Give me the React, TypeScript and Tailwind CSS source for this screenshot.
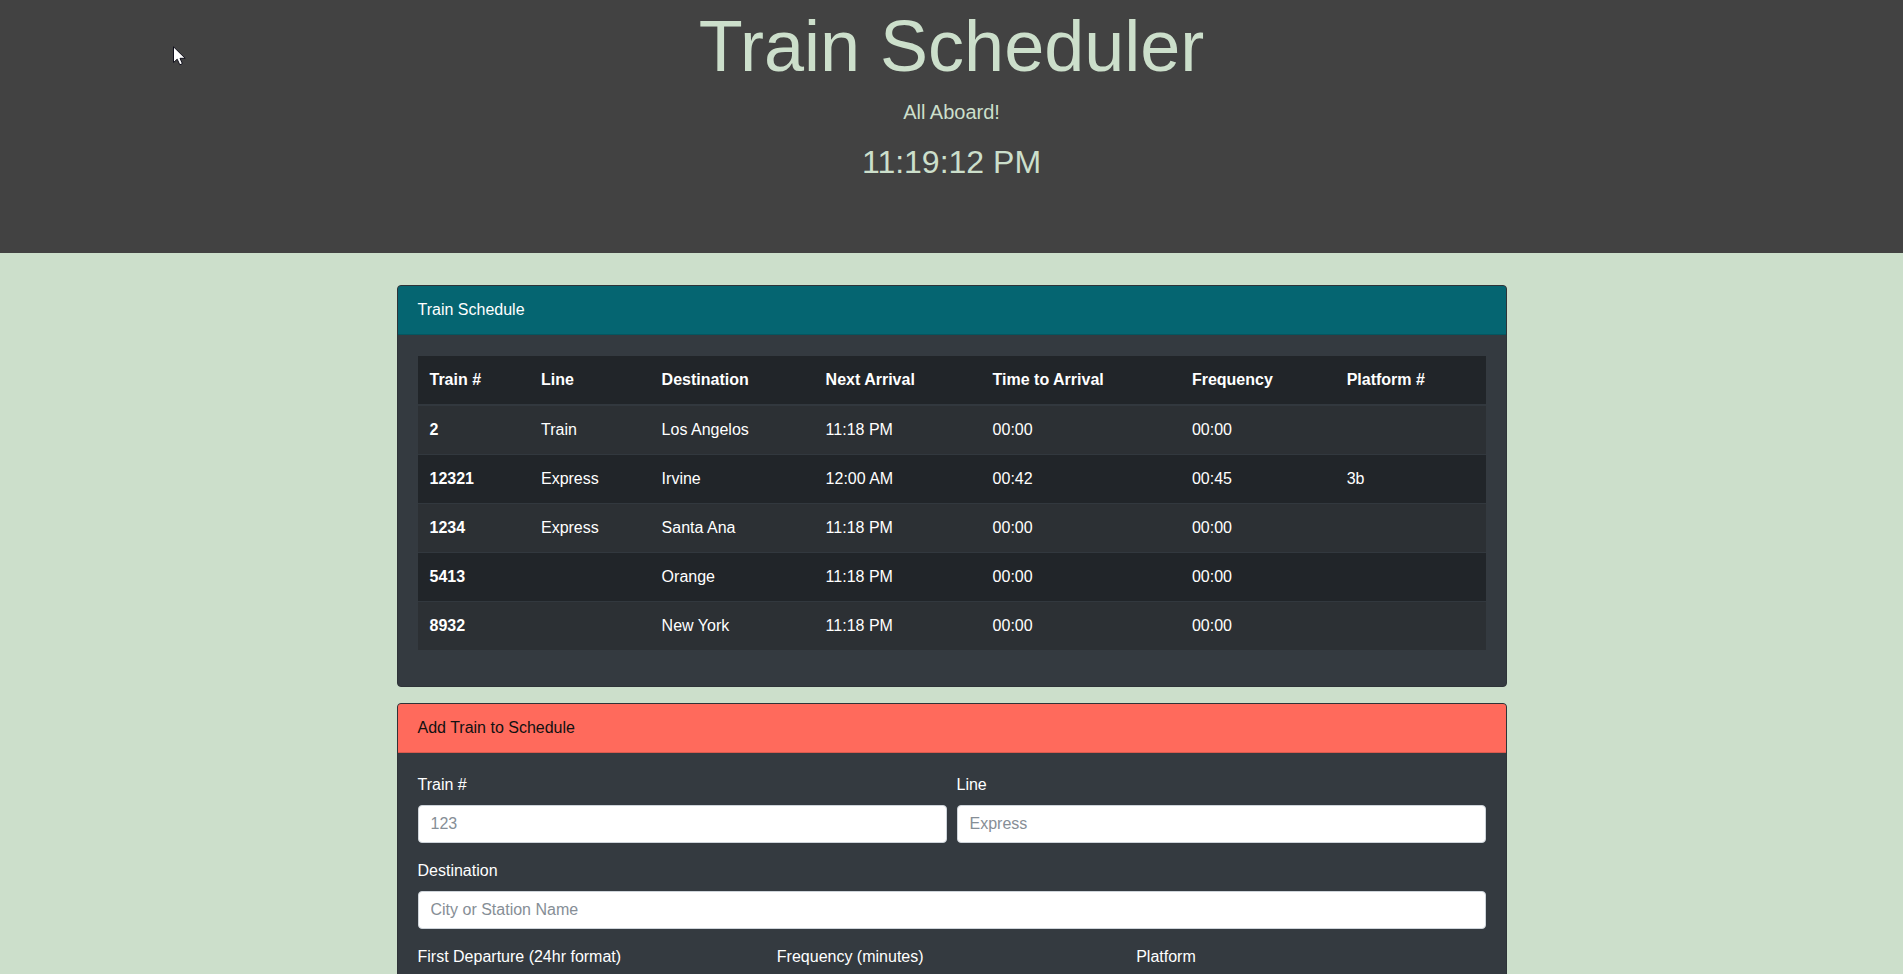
import type { ReactNode } from 'react';

type Train = {
  id: string;
  line: string;
  destination: string;
  next: string;
  wait: string;
  frequency: string;
  platform: string;
};

const columns = ['Train #', 'Line', 'Destination', 'Next Arrival', 'Time to Arrival', 'Frequency', 'Platform #'];

const trains: Train[] = [
  { id: '2', line: 'Train', destination: 'Los Angelos', next: '11:18 PM', wait: '00:00', frequency: '00:00', platform: '' },
  { id: '12321', line: 'Express', destination: 'Irvine', next: '12:00 AM', wait: '00:42', frequency: '00:45', platform: '3b' },
  { id: '1234', line: 'Express', destination: 'Santa Ana', next: '11:18 PM', wait: '00:00', frequency: '00:00', platform: '' },
  { id: '5413', line: '', destination: 'Orange', next: '11:18 PM', wait: '00:00', frequency: '00:00', platform: '' },
  { id: '8932', line: '', destination: 'New York', next: '11:18 PM', wait: '00:00', frequency: '00:00', platform: '' },
];

function Card({ title, headerClass, children }: { title: string; headerClass: string; children: ReactNode }) {
  return (
    <section className="mb-4 overflow-hidden rounded border border-[#2e3338] bg-[#343a40] text-white">
      <h2 className={`border-b border-black/15 px-5 py-3 ${headerClass}`}>{title}</h2>
      {children}
    </section>
  );
}

function Field({ id, label, placeholder }: { id: string; label: string; placeholder?: string }) {
  return (
    <div className="mb-4 min-w-0 flex-1">
      <label htmlFor={id} className="mb-2 block">
        {label}
      </label>
      <input
        id={id}
        type="text"
        placeholder={placeholder}
        className="block h-[38px] w-full rounded border border-[#ced4da] bg-white px-3 text-[#495057] placeholder:text-[#868e96]"
      />
    </div>
  );
}

export default function App() {
  return (
    <div className="flow-root min-h-screen bg-[#ccdfcb] font-['Liberation_Sans',Arial,sans-serif] text-base leading-6">
      <header className="mb-8 bg-[#424242] pt-[3px] pb-16 text-center text-[#ccdfcb]">
        <h1 className="mb-2 text-[72px] leading-[86px]">Train Scheduler</h1>
        <p className="mb-4 text-xl leading-[30px]">All Aboard!</p>
        <p className="mb-2 text-[32px] leading-[38px]">11:19:12 PM</p>
      </header>

      <main className="mx-auto max-w-[1140px] px-[15px]">
        <Card title="Train Schedule" headerClass="bg-[#056571]">
          <div className="px-5 pt-[21px] pb-9">
            <table className="w-full border-separate border-spacing-0 bg-[#212529] text-left">
              <thead>
                <tr>
                  {columns.map((name) => (
                    <th key={name} scope="col" className="border-b-2 border-[#32383e] p-3 font-bold">
                      {name}
                    </th>
                  ))}
                </tr>
              </thead>
              <tbody className="[&>tr:nth-child(odd)]:bg-[#2c3034] [&>tr:not(:first-child)>*]:border-t [&>tr>*]:border-[#32383e] [&>tr>*]:p-3">
                {trains.map((train) => (
                  <tr key={train.id}>
                    <th scope="row" className="font-bold">
                      {train.id}
                    </th>
                    <td>{train.line}</td>
                    <td>{train.destination}</td>
                    <td>{train.next}</td>
                    <td>{train.wait}</td>
                    <td>{train.frequency}</td>
                    <td>{train.platform}</td>
                  </tr>
                ))}
              </tbody>
            </table>
          </div>
        </Card>

        <Card title="Add Train to Schedule" headerClass="bg-[#ff6a5c] text-[#111111]">
          <form className="p-5">
            <div className="flex gap-[10px]">
              <Field id="train-number" label="Train #" placeholder="123" />
              <Field id="line" label="Line" placeholder="Express" />
            </div>
            <Field id="destination" label="Destination" placeholder="City or Station Name" />
            <div className="flex gap-[10px]">
              <Field id="departure" label="First Departure (24hr format)" />
              <Field id="frequency" label="Frequency (minutes)" />
              <Field id="platform" label="Platform" />
            </div>
          </form>
        </Card>
      </main>

      <svg
        className="pointer-events-none absolute top-[46px] left-[173px]"
        width="13"
        height="20"
        viewBox="0 0 13 20"
        aria-hidden="true"
      >
        <path
          d="M0.5 0.8V16.5L4.2 13.2L6.8 18.8L9.4 17.6L7 12.3H12.2Z"
          fill="#fff"
          stroke="#10101c"
          strokeWidth="1"
        />
      </svg>
    </div>
  );
}
